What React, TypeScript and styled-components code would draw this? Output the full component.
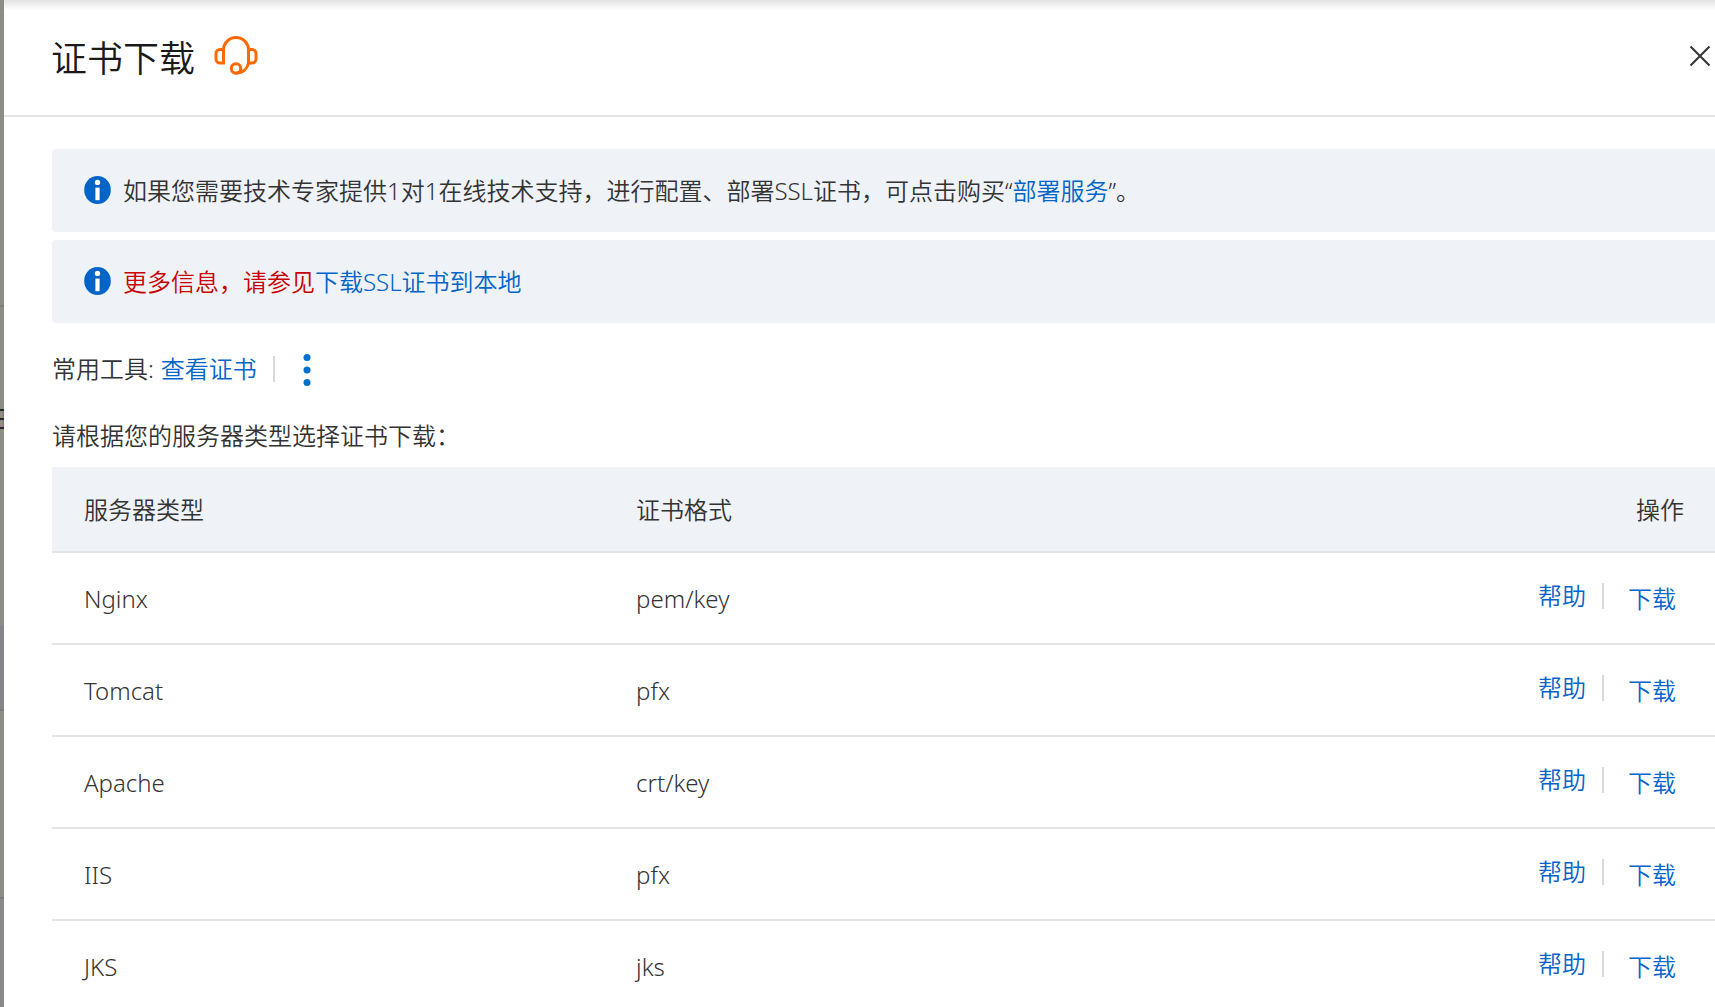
import React from "react";
import styled, { createGlobalStyle } from "styled-components";

const blue = "#0064c8";
const line = "#e3e4e6";
const panel = "#eff2f7";

const GlobalStyle = createGlobalStyle`
  * { box-sizing: border-box; }
  html, body, #root { height: 100%; }
  body {
    margin: 0;
    background: #fff;
    color: #333;
    font-family: "Noto Sans", "Noto Sans CJK SC", sans-serif;
    font-size: 24px;
    font-weight: 350;
    line-height: 36px;
    overflow: hidden;
  }
`;

const Page = styled.div`
  display: grid;
  grid-template-columns: 4px minmax(0, 1fr);
  height: 100%;
  overflow: hidden;
`;

const Backdrop = styled.div`
  display: flex;
  flex-direction: column;
  background: #8e8c89;
`;

const Stripe = styled.div<{ $height: number; $color?: string }>`
  flex: none;
  height: ${(p) => p.$height}px;
  background: ${(p) => p.$color || "#8e8c89"};
`;

const Glyph = styled.svg`
  flex: none;
  display: block;
`;

const Drawer = styled.main`
  background: #fff;
`;

const Header = styled.header`
  display: flex;
  align-items: center;
  gap: 19px;
  height: 117px;
  padding: 0 4px 4px 47px;
  border-bottom: 2px solid ${line};
  background: linear-gradient(#e2e2e2, #fff 10px);
`;

const Title = styled.h1`
  margin: 0;
  padding-top: 6px;
  color: #1a1a1a;
  font-size: 36px;
  font-weight: 350;
  line-height: 48px;
`;

const CloseButton = styled.button`
  display: flex;
  margin: 0 0 0 auto;
  padding: 0;
  border: 0;
  background: none;
  cursor: pointer;
`;

const Content = styled.div`
  padding: 32px 0 0 48px;
`;

const Notices = styled.div`
  display: grid;
  gap: 8px;
`;

const Notice = styled.section<{ $danger?: boolean }>`
  display: flex;
  align-items: center;
  gap: 11px;
  height: 83px;
  padding: 0 32px;
  border-radius: 4px 0 0 4px;
  background: ${panel};
  color: ${(p) => (p.$danger ? "#c80000" : "#333")};

  p { margin: 0; }
`;

const Link = styled.a`
  color: ${blue};
  text-decoration: none;
`;

const Tools = styled.div`
  display: flex;
  align-items: center;
  gap: 7px;
  height: 36px;
  margin-top: 28px;
`;

const Divider = styled.span`
  width: 2px;
  height: 26px;
  background: #d9d9d9;
`;

const MoreButton = styled.button`
  display: flex;
  padding: 2px 0 0;
  border: 0;
  background: none;
  cursor: pointer;
`;

const ToolLinks = styled.div`
  display: flex;
  align-items: center;
  gap: 16px;
`;

const Prompt = styled.p`
  margin: 31px 0 13px;
`;

const Table = styled.table`
  width: 100%;
  table-layout: fixed;
  border-collapse: separate;
  border-spacing: 0;
`;

const Th = styled.th<{ $right?: boolean }>`
  height: 86px;
  padding: 2px 31px 0 32px;
  border-bottom: 2px solid ${line};
  background: ${panel};
  font-weight: 350;
  text-align: ${(p) => (p.$right ? "right" : "left")};
`;

const Td = styled.td`
  height: 92px;
  padding: 2px 31px 0 32px;
  border-bottom: 2px solid ${line};
`;

const Actions = styled.div`
  display: flex;
  align-items: center;
  justify-content: flex-end;
  gap: 24px;
  padding-right: 8px;
`;

const HelpGroup = styled.span`
  display: flex;
  align-items: center;
  gap: 16px;
  padding-bottom: 6px;
`;

const InfoIcon = () => (
  <svg width="28" height="30" viewBox="0 0 28 30" aria-hidden="true">
    <ellipse cx="13.500" cy="14" rx="13.300" ry="14" fill={blue} />
    <circle cx="13.500" cy="6.400" r="2.700" fill="#fff" />
    <rect x="11.400" y="11.600" width="4.200" height="12.600" fill="#fff" />
  </svg>
);

const Headset = () => (
  <svg width="44" height="40" viewBox="0 0 44 40" fill="none" stroke="#ff6a00" strokeWidth="3" aria-hidden="true">
    <path d="M9.500 13.500H6a4 4 0 0 0-4 4v5.500a4 4 0 0 0 4 4h3.500z" />
    <path d="M34.500 13.500H38a4 4 0 0 1 4 4v5.500a4 4 0 0 1-4 4h-3.500z" />
    <path d="M9.500 14a12.500 12.500 0 0 1 25 0v13c-1 5-5 10-12.500 10" />
    <circle cx="22" cy="32.500" r="4.700" />
  </svg>
);

const rows = [
  { server: "Nginx", format: "pem/key" },
  { server: "Tomcat", format: "pfx" },
  { server: "Apache", format: "crt/key" },
  { server: "IIS", format: "pfx" },
  { server: "JKS", format: "jks" },
];

export default function App() {
  return (
    <>
      <GlobalStyle />
      <Page>
        <Backdrop aria-hidden="true">
          <Stripe $height={305} />
          <Stripe $height={2} $color="#7f7e7c" />
          <Stripe $height={102} />
          <Glyph width="4" height="20" viewBox="0 0 4 20">
            <path d="M3.500 1v18" stroke="#a5712f" strokeWidth="1" />
            <path d="M0 1h4M0 10h4M0 19h4" stroke="#26262a" strokeWidth="2" />
          </Glyph>
          <Stripe $height={196} />
          <Stripe $height={84} $color="#858689" />
          <Stripe $height={2} $color="#7b7b7b" />
          <Stripe $height={186} />
          <Stripe $height={2} $color="#7b7b7b" />
          <Stripe $height={108} $color="#8a8b88" />
        </Backdrop>
        <Drawer>
          <Header>
            <Title>证书下载</Title>
            <Headset />
            <CloseButton type="button" aria-label="关闭">
              <svg width="22" height="22" viewBox="0 0 22 22" aria-hidden="true">
                <path d="M1.500 1.500l19 19M20.500 1.500l-19 19" stroke="#333" strokeWidth="2" />
              </svg>
            </CloseButton>
          </Header>
          <Content>
            <Notices>
              <Notice>
                <InfoIcon />
                <p>
                  如果您需要技术专家提供1对1在线技术支持，进行配置、部署SSL证书，可点击购买“<Link href="#deploy">部署服务</Link>”。
                </p>
              </Notice>
              <Notice $danger>
                <InfoIcon />
                <p>
                  更多信息，请参见<Link href="#docs">下载SSL证书到本地</Link>
                </p>
              </Notice>
            </Notices>
            <Tools>
              <span>常用工具:</span>
              <ToolLinks>
                <Link href="#view">查看证书</Link>
                <Divider />
                <MoreButton type="button" aria-label="更多">
                  <svg width="32" height="32" viewBox="0 0 32 32" fill="#0070cc" aria-hidden="true">
                    <circle cx="16" cy="3.500" r="3.500" />
                    <circle cx="16" cy="16" r="3.500" />
                    <circle cx="16" cy="28.500" r="3.500" />
                  </svg>
                </MoreButton>
              </ToolLinks>
            </Tools>
            <Prompt>请根据您的服务器类型选择证书下载：</Prompt>
            <Table>
              <colgroup>
                <col style={{ width: "33.2%" }} />
                <col />
                <col style={{ width: "20%" }} />
              </colgroup>
              <thead>
                <tr>
                  <Th scope="col">服务器类型</Th>
                  <Th scope="col">证书格式</Th>
                  <Th scope="col" $right>操作</Th>
                </tr>
              </thead>
              <tbody>
                {rows.map((row) => (
                  <tr key={row.server}>
                    <Td>{row.server}</Td>
                    <Td>{row.format}</Td>
                    <Td>
                      <Actions>
                        <HelpGroup>
                          <Link href="#help">帮助</Link>
                          <Divider />
                        </HelpGroup>
                        <Link href="#download">下载</Link>
                      </Actions>
                    </Td>
                  </tr>
                ))}
              </tbody>
            </Table>
          </Content>
        </Drawer>
      </Page>
    </>
  );
}
